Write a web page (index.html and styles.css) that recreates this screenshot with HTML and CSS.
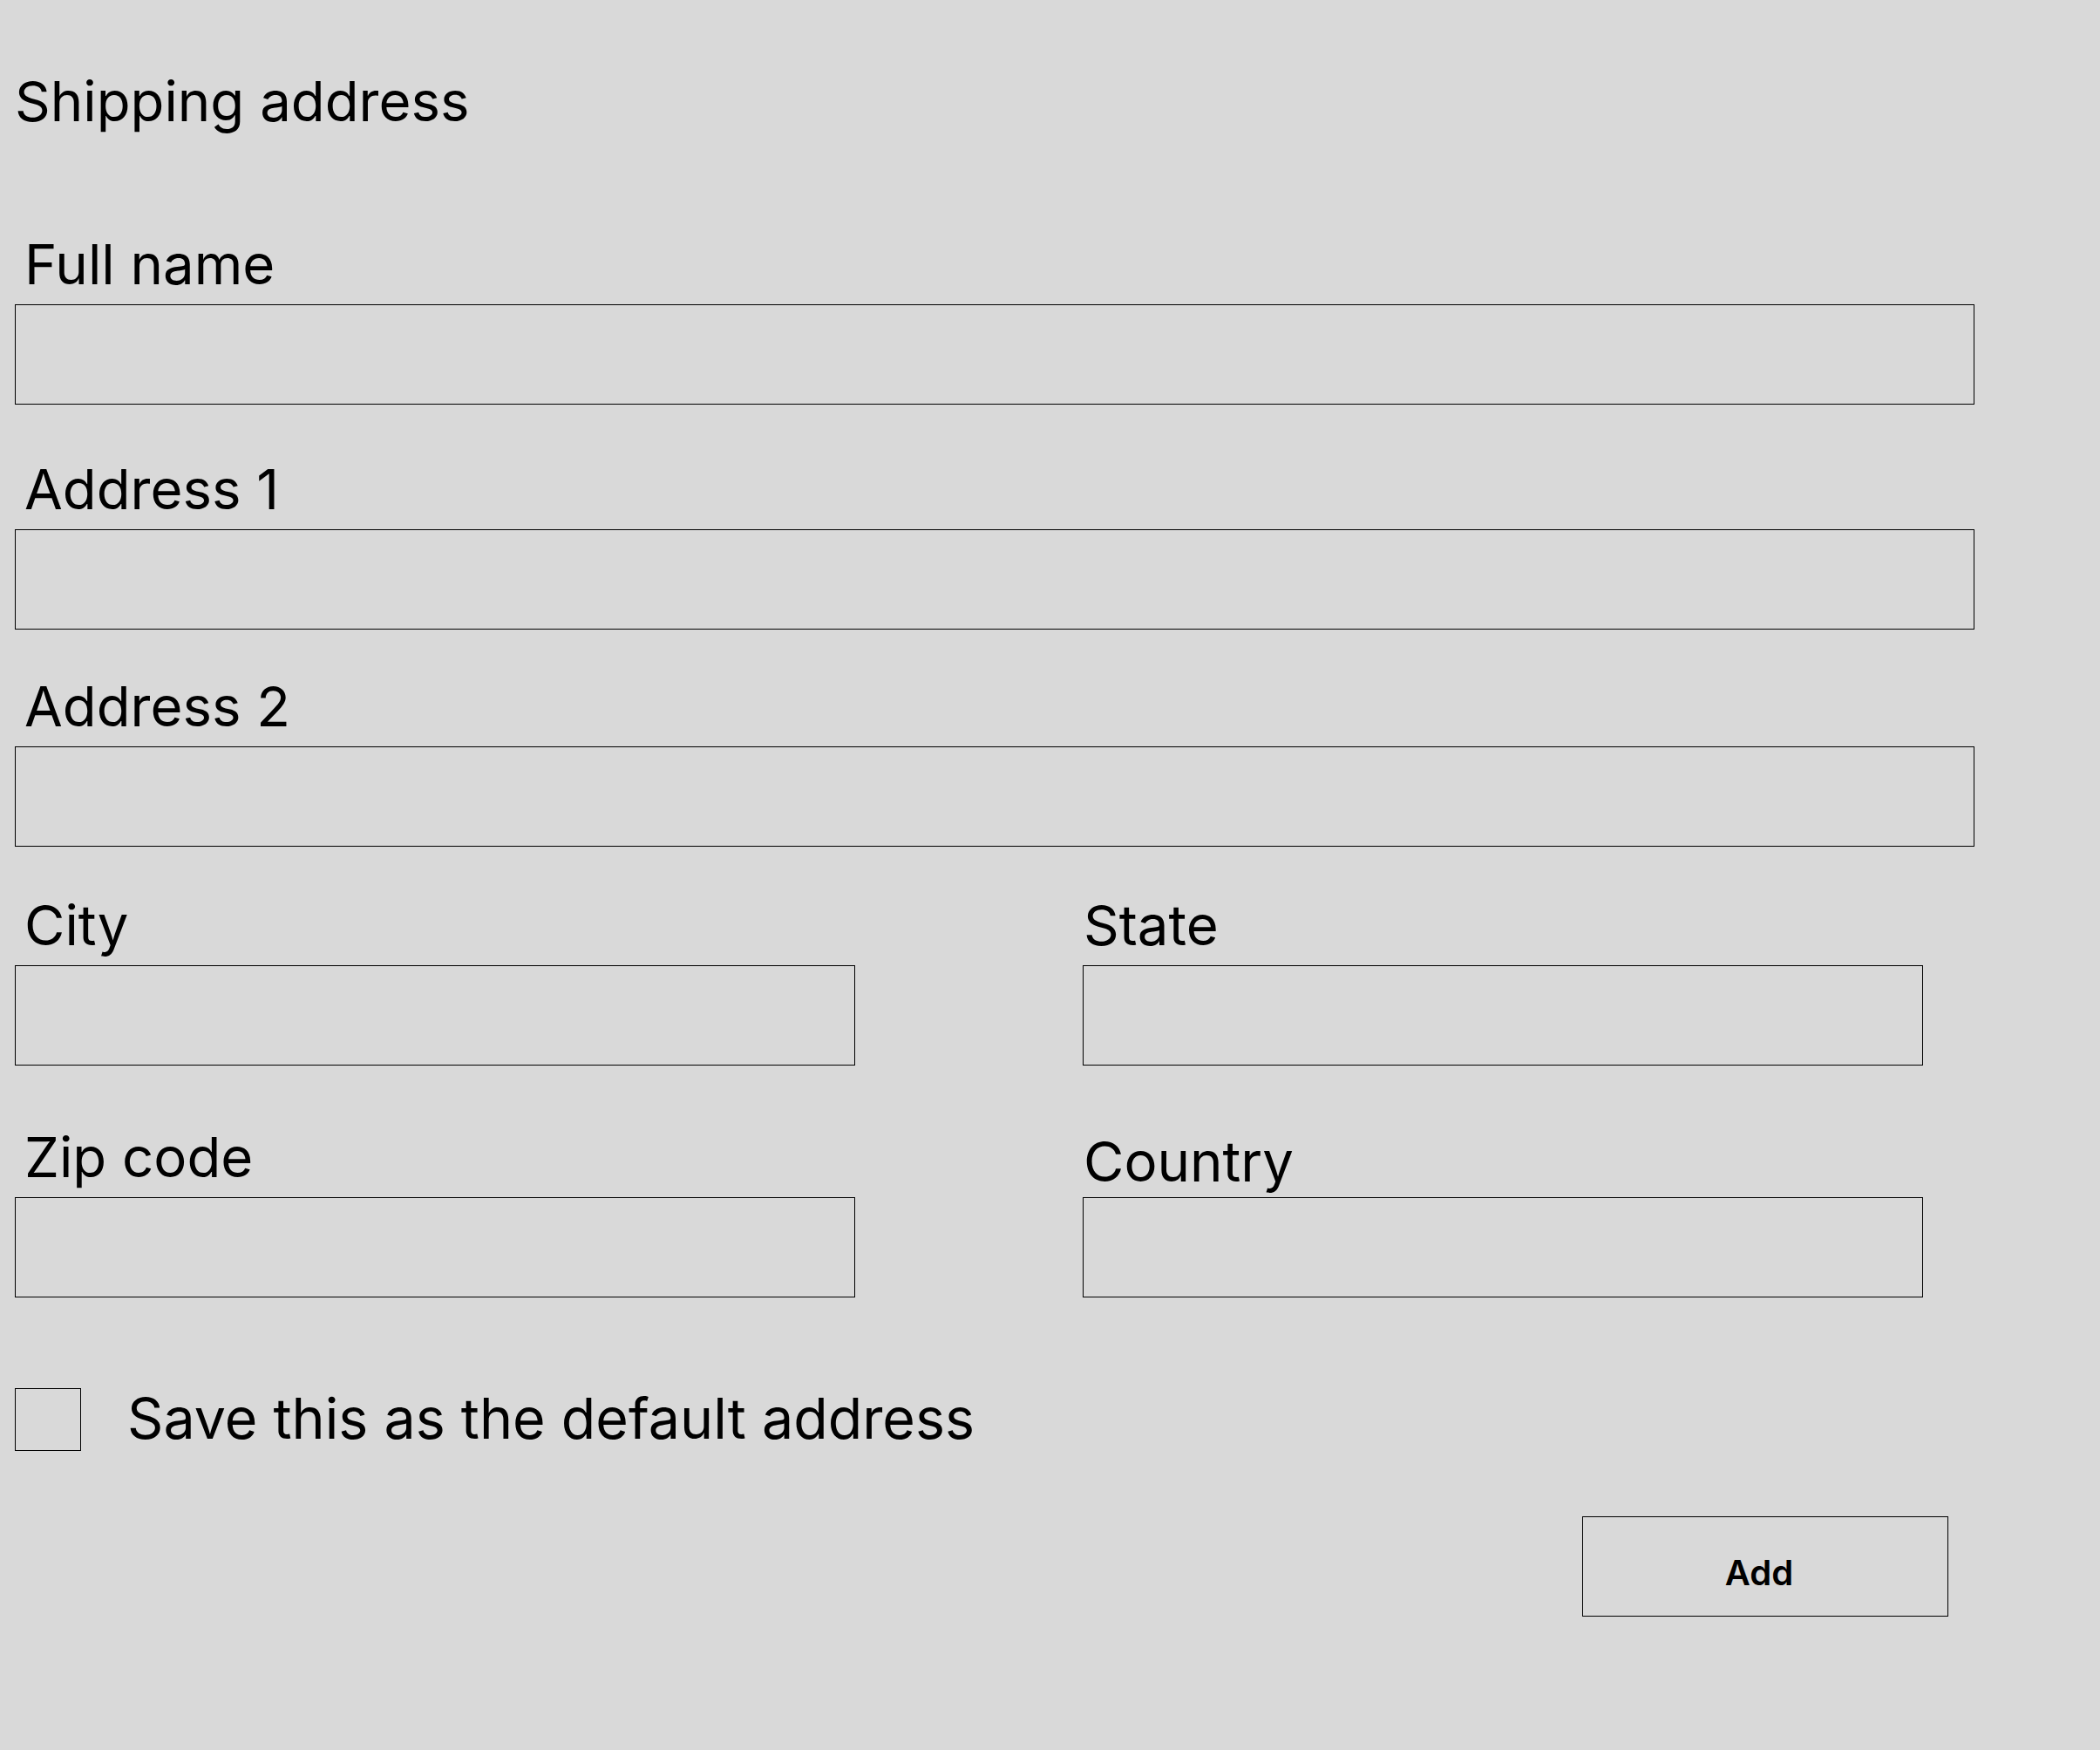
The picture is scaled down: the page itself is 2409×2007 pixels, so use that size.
FILE: index.html
```html
<!DOCTYPE html>
<html lang="en">
<head>
<meta charset="utf-8">
<title>Shipping address</title>
<link rel="stylesheet" href="styles.css">
</head>
<body>
<form class="form">
  <h1 class="title">Shipping address</h1>

  <div class="field field-full">
    <label class="label">Full name</label>
    <input class="input" type="text">
  </div>

  <div class="field field-a1">
    <label class="label">Address 1</label>
    <input class="input" type="text">
  </div>

  <div class="field field-a2">
    <label class="label">Address 2</label>
    <input class="input" type="text">
  </div>

  <div class="pair pair-city">
    <div class="field">
      <label class="label">City</label>
      <input class="input" type="text">
    </div>
    <div class="field">
      <label class="label label-right">State</label>
      <input class="input" type="text">
    </div>
  </div>

  <div class="pair pair-zip">
    <div class="field">
      <label class="label">Zip code</label>
      <input class="input" type="text">
    </div>
    <div class="field">
      <label class="label label-right label-low">Country</label>
      <input class="input" type="text">
    </div>
  </div>

  <div class="check-row">
    <input class="check" type="checkbox">
    <span class="check-text">Save this as the default address</span>
  </div>

  <div class="actions">
    <button class="btn" type="button">Add</button>
  </div>
</form>
</body>
</html>
```

FILE: styles.css
```css
html, body {
  margin: 0;
  padding: 0;
  background: #d9d9d9;
}

body {
  font-family: Inter, "Noto Sans", sans-serif;
  color: #000;
}

.form {
  width: 2248px;
  padding: 0 0 0 17px;
  margin: 0;
  display: flex;
  flex-direction: column;
}

.title {
  margin: 77px 0 0 0;
  font-size: 63.5px;
  font-weight: 400;
  line-height: 77px;
  padding-left: 0;
}

.field {
  display: flex;
  flex-direction: column;
}

.field-full { margin-top: 110px; }
.field-a1 { margin-top: 58px; }
.field-a2 { margin-top: 49px; }

.label {
  display: block;
  font-size: 63.5px;
  line-height: 77px;
  padding-left: 11px;
  margin-bottom: 8px;
}

.label-right {
  padding-left: 1px;
}

.label-low {
  margin-top: 5px;
  margin-bottom: 3px;
}

.input {
  appearance: none;
  -webkit-appearance: none;
  display: block;
  box-sizing: border-box;
  width: 100%;
  height: 115px;
  margin: 0;
  padding: 0 20px;
  border: 1px solid #000;
  border-radius: 0;
  background: transparent;
  font-family: inherit;
  font-size: 44px;
}

.pair {
  display: grid;
  grid-template-columns: 964px 964px;
  column-gap: 261px;
  align-items: start;
}

.pair-city { margin-top: 51px; }
.pair-zip { margin-top: 66px; }

.check-row {
  display: flex;
  align-items: center;
  margin-top: 101px;
  gap: 53px;
}

.check {
  appearance: none;
  -webkit-appearance: none;
  box-sizing: border-box;
  width: 76px;
  height: 72px;
  margin: 0;
  border: 1px solid #000;
  border-radius: 0;
  background: transparent;
}

.check-text {
  font-size: 64.5px;
  line-height: 77px;
}

.actions {
  display: flex;
  justify-content: flex-end;
  padding-right: 30px;
  margin-top: 73px;
}

.btn {
  box-sizing: border-box;
  width: 420px;
  height: 115px;
  margin: 0;
  padding: 13px 14px 0 0;
  border: 1px solid #000;
  border-radius: 0;
  background: transparent;
  font-family: Inter, "Noto Sans", sans-serif;
  font-size: 40px;
  font-weight: 600;
  color: #000;
}
```
